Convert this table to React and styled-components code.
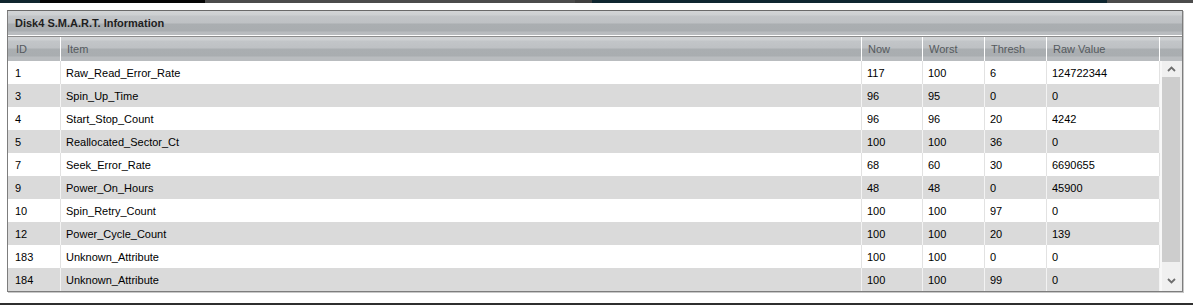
import React from 'react';
import styled, { createGlobalStyle } from 'styled-components';

const GlobalStyle = createGlobalStyle`
  html, body {
    margin: 0;
    padding: 0;
    background: #ffffff;
  }
  body {
    font-family: 'Liberation Sans', Arial, sans-serif;
    font-size: 11px;
  }
`;

const columns = [
  { key: 'id', label: 'ID', width: 53 },
  { key: 'item', label: 'Item', width: 801 },
  { key: 'now', label: 'Now', width: 61 },
  { key: 'worst', label: 'Worst', width: 62 },
  { key: 'thresh', label: 'Thresh', width: 62 },
  { key: 'raw', label: 'Raw Value', width: 113 },
];

const rows = [
  { id: 1, item: 'Raw_Read_Error_Rate', now: 117, worst: 100, thresh: 6, raw: 124722344 },
  { id: 3, item: 'Spin_Up_Time', now: 96, worst: 95, thresh: 0, raw: 0 },
  { id: 4, item: 'Start_Stop_Count', now: 96, worst: 96, thresh: 20, raw: 4242 },
  { id: 5, item: 'Reallocated_Sector_Ct', now: 100, worst: 100, thresh: 36, raw: 0 },
  { id: 7, item: 'Seek_Error_Rate', now: 68, worst: 60, thresh: 30, raw: 6690655 },
  { id: 9, item: 'Power_On_Hours', now: 48, worst: 48, thresh: 0, raw: 45900 },
  { id: 10, item: 'Spin_Retry_Count', now: 100, worst: 100, thresh: 97, raw: 0 },
  { id: 12, item: 'Power_Cycle_Count', now: 100, worst: 100, thresh: 20, raw: 139 },
  { id: 183, item: 'Unknown_Attribute', now: 100, worst: 100, thresh: 0, raw: 0 },
  { id: 184, item: 'Unknown_Attribute', now: 100, worst: 100, thresh: 99, raw: 0 },
];

// strip of the page behind the window
const stripParts = [
  { color: '#10262f', width: 40 },
  { color: '#050505', width: 165 },
  { color: '#4b4b4b', width: 370 },
  { color: '#3f3f3f', width: 17 },
  { color: '#0f2630', width: 515 },
  { color: '#4b4b4b', width: 86 },
];

const App = () => {
  return (
    <>
      <GlobalStyle />
      <StPage>
        <StTopStrip>
          {stripParts.map((p, i) => (
            <StStripPart key={i} color={p.color} width={p.width} />
          ))}
        </StTopStrip>

        <StPanel>
          <StTitleBar>Disk4 S.M.A.R.T. Information</StTitleBar>

          <StHeader>
            {columns.map((c) => (
              <StHeadCell key={c.key} width={c.width} first={c.key === 'id'}>
                {c.label}
              </StHeadCell>
            ))}
            <StHeadCell width={21} />
          </StHeader>

          <StBody>
            <StRows>
              {rows.map((r, i) => (
                <StRow key={r.id} striped={i % 2 === 1}>
                  {columns.map((c) => (
                    <StCell key={c.key} width={c.width} striped={i % 2 === 1} first={c.key === 'id'}>
                      {r[c.key]}
                    </StCell>
                  ))}
                </StRow>
              ))}
            </StRows>

            <StScrollbar>
              <StScrollBtn height={16}>
                <Chevron dir='up' />
              </StScrollBtn>
              <StThumb />
              <StScrollBtn height={29} bottom>
                <Chevron dir='down' />
              </StScrollBtn>
            </StScrollbar>
          </StBody>
        </StPanel>

        <StBottomStrip />
      </StPage>
    </>
  );
};

const Chevron = ({ dir }) => (
  <svg width='9' height='6' viewBox='0 0 9 6'>
    <path
      d={dir === 'up' ? 'M1 5 L4.5 1.5 L8 5' : 'M1 1 L4.5 4.5 L8 1'}
      fill='none'
      stroke='#6e6e6e'
      strokeWidth='1.8'
    />
  </svg>
);

export default App;

const StPage = styled.div`
  display: flex;
  flex-direction: column;
  width: 1193px;
  height: 306px;
  overflow: hidden;
`;

const StTopStrip = styled.div`
  display: flex;
  height: 3px;
`;

const StStripPart = styled.div`
  width: ${(p) => p.width}px;
  background: ${(p) => p.color};
`;

const StPanel = styled.section`
  width: 1174px;
  margin: 7px 0 0 7px;
  border: 1px solid #7d7d7d;
  border-top-color: #6a6a6a;
  box-shadow: 1px 1px 0 #c8c8c8;
  background: #f4f4f4;
`;

const StTitleBar = styled.div`
  height: 24px;
  padding-left: 7px;
  display: flex;
  align-items: center;
  font-weight: bold;
  font-size: 11px;
  color: #1e1e1e;
  background: linear-gradient(
    to bottom,
    #d2d4d6 0px,
    #cdd0d2 4px,
    #c2c5c8 5px,
    #bec1c4 12px,
    #aaaeb1 13px,
    #a9adb0 20px,
    #b9bcbf 21px,
    #b9bcbf 100%
  );
  border-bottom: 1px solid #ffffff;
`;

const StHeader = styled.div`
  display: flex;
  height: 24px;
  border-top: 1px solid #8c8c8c;
  background: linear-gradient(
    to bottom,
    #d0d2d4 0px,
    #cdd0d2 3px,
    #c2c5c8 4px,
    #bec1c4 11px,
    #aaaeb1 12px,
    #a9adb0 19px,
    #b9bcbf 20px,
    #b9bcbf 100%
  );
`;

const StHeadCell = styled.div`
  width: ${(p) => p.width}px;
  flex-shrink: 0;
  box-sizing: border-box;
  padding-left: ${(p) => (p.first ? '8px' : '6px')};
  display: flex;
  align-items: center;
  color: #555a5e;
  font-size: 11px;
  border-right: 1px solid #ffffff;

  &:last-child {
    border-right: none;
  }
`;

const StBody = styled.div`
  display: flex;
`;

const StRows = styled.div`
  display: flex;
  flex-direction: column;
  width: 1152px;
`;

const StRow = styled.div`
  display: flex;
  height: 23px;
  background: ${(p) => (p.striped ? '#dadada' : '#ffffff')};
`;

const StCell = styled.div`
  width: ${(p) => p.width}px;
  flex-shrink: 0;
  box-sizing: border-box;
  padding-left: ${(p) => (p.first ? '7px' : '5px')};
  display: flex;
  align-items: center;
  color: #000000;
  font-size: 11px;
  border-right: 1px solid ${(p) => (p.striped ? '#f3f3f3' : '#e2e2e2')};
`;

const StScrollbar = styled.div`
  display: flex;
  flex-direction: column;
  width: 22px;
  height: 230px;
  box-sizing: border-box;
  border-left: 2px solid #f8f8f8;
  border-right: 2px solid #ececec;
`;

const StScrollBtn = styled.div`
  height: ${(p) => p.height}px;
  display: flex;
  justify-content: center;
  align-items: ${(p) => (p.bottom ? 'flex-end' : 'center')};
  padding-bottom: ${(p) => (p.bottom ? '7px' : '0')};
  box-sizing: border-box;
  background: #f0f0f0;
`;

const StThumb = styled.div`
  flex: 1;
  background: #cdcdcd;
`;

const StBottomStrip = styled.div`
  margin-top: auto;
  margin-bottom: 1px;
  height: 2px;
  background: #2f2f2f;
`;
